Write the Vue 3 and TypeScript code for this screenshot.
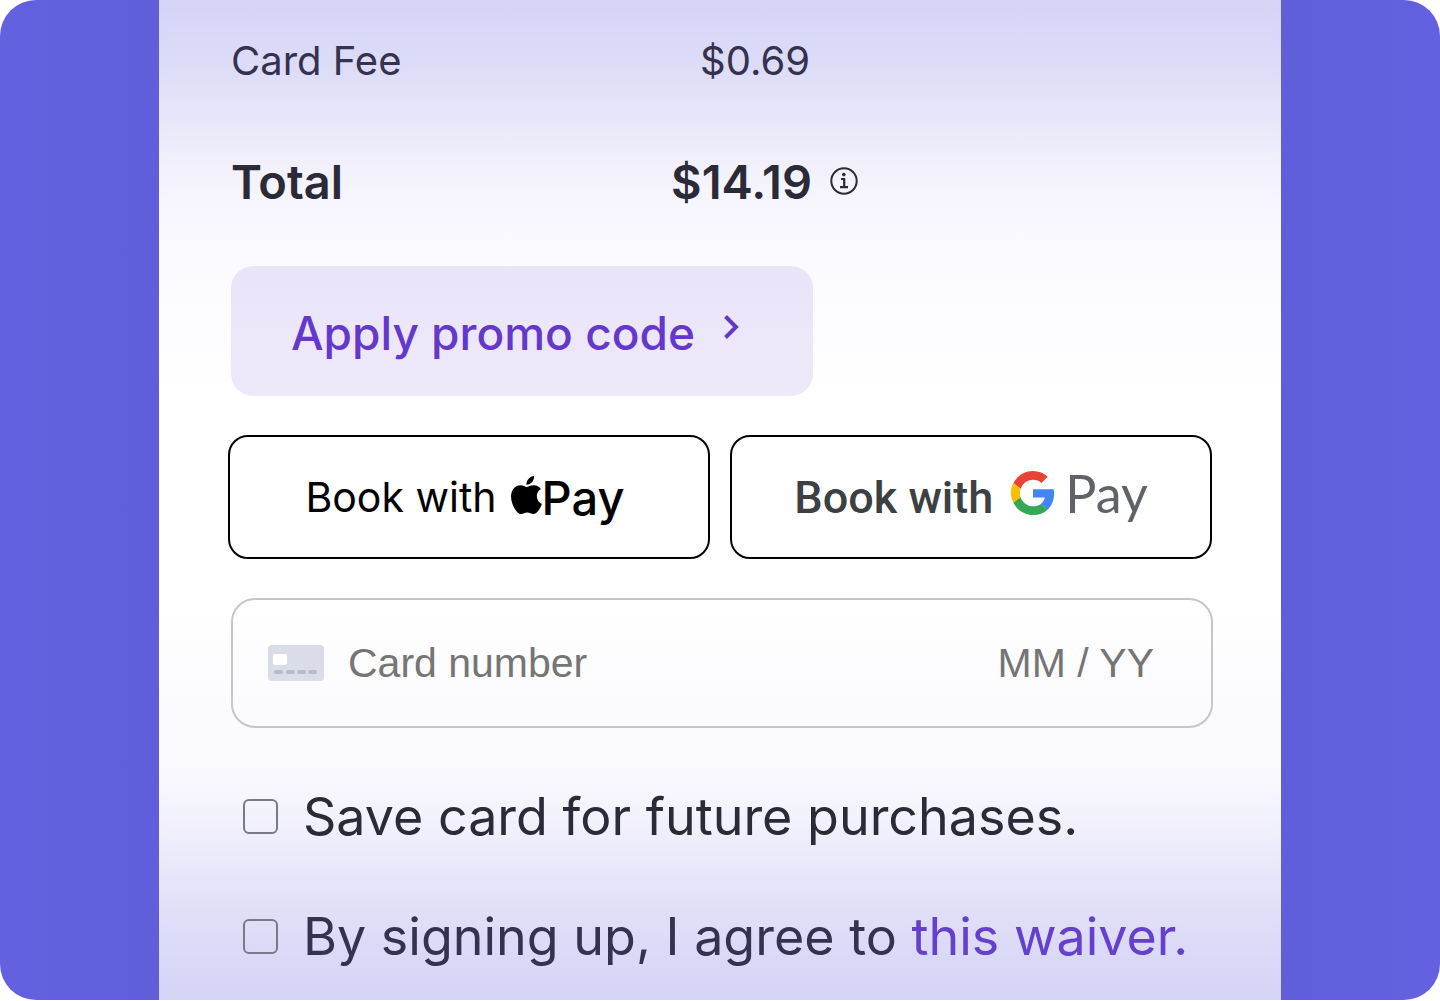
<script setup lang="ts">
import { ref } from 'vue'

interface PriceLine {
  label: string
  amount: string
  total: boolean
}

const lines: PriceLine[] = [
  { label: 'Card Fee', amount: '$0.69', total: false },
  { label: 'Total', amount: '$14.19', total: true },
]

const cardNumber = ref('')
const expiry = ref('')
const saveCard = ref(false)
const agree = ref(false)
</script>

<template>
  <div class="frame">
    <main class="panel">
      <dl class="prices">
        <div v-for="line in lines" :key="line.label" class="price" :class="{ total: line.total }">
          <dt>{{ line.label }}</dt>
          <dd>{{ line.amount }}</dd>
          <svg v-if="line.total" class="info" viewBox="0 0 28 28" role="img" aria-label="Details">
            <circle cx="14" cy="14" r="12.7" fill="none" stroke="currentColor" stroke-width="2" />
            <circle cx="13.8" cy="7.6" r="1.8" fill="currentColor" />
            <path d="M11 12h3.2v8M10 20.2h8" fill="none" stroke="currentColor" stroke-width="2.2" />
          </svg>
        </div>
      </dl>

      <button type="button" class="promo">
        <span>Apply promo code</span>
        <svg class="chevron" viewBox="0 0 16 26" aria-hidden="true">
          <path d="M2.5 2.5 13 13 2.5 23.5" fill="none" stroke="currentColor" stroke-width="4" />
        </svg>
      </button>

      <div class="wallets">
        <button type="button" class="wallet apple">
          <span class="book">Book with</span>
          <span class="brand">
            <svg class="apple-mark" viewBox="2.2 0 19.6 24" aria-hidden="true">
              <path d="M12.152 6.896c-.948 0-2.415-1.078-3.96-1.04-2.04.027-3.91 1.183-4.961 3.014-2.117 3.675-.546 9.103 1.519 12.09 1.013 1.454 2.208 3.09 3.792 3.039 1.52-.065 2.09-.987 3.935-.987 1.831 0 2.35.987 3.96.948 1.637-.026 2.676-1.48 3.676-2.948 1.156-1.688 1.636-3.325 1.662-3.415-.039-.013-3.182-1.221-3.22-4.857-.026-3.04 2.48-4.494 2.597-4.559-1.429-2.09-3.623-2.324-4.39-2.376-2-.156-3.675 1.09-4.61 1.09zM15.53 3.83c.843-1.012 1.4-2.427 1.245-3.83-1.207.052-2.662.805-3.532 1.818-.78.896-1.454 2.338-1.273 3.714 1.338.104 2.715-.688 3.559-1.701" />
            </svg>
            <span class="pay">Pay</span>
          </span>
        </button>
        <button type="button" class="wallet google">
          <span class="book">Book with</span>
          <span class="brand">
            <svg class="google-mark" viewBox="0 0 48 48" aria-hidden="true">
              <path fill="#ea4335" d="M24 9.5c3.54 0 6.71 1.22 9.21 3.6l6.85-6.85C35.9 2.38 30.47 0 24 0 14.62 0 6.51 5.38 2.56 13.22l7.98 6.19C12.43 13.72 17.74 9.5 24 9.5z" />
              <path fill="#4285f4" d="M46.98 24.55c0-1.57-.15-3.09-.38-4.55H24v9.02h12.94c-.58 2.96-2.26 5.48-4.78 7.18l7.73 6c4.51-4.18 7.09-10.36 7.09-17.65z" />
              <path fill="#fbbc05" d="M10.53 28.59c-.48-1.45-.76-2.99-.76-4.59s.27-3.14.76-4.59l-7.98-6.19C.92 16.46 0 20.12 0 24c0 3.88.92 7.54 2.56 10.78l7.97-6.19z" />
              <path fill="#34a853" d="M24 48c6.48 0 11.93-2.13 15.89-5.81l-7.73-6c-2.15 1.45-4.92 2.3-8.16 2.3-6.26 0-11.57-4.22-13.47-9.91l-7.98 6.19C6.51 42.62 14.62 48 24 48z" />
            </svg>
            <span class="pay">Pay</span>
          </span>
        </button>
      </div>

      <div class="card">
        <svg class="card-icon" viewBox="0 0 56 36" aria-hidden="true">
          <rect width="56" height="36" rx="4" fill="#dadce7" />
          <rect x="5" y="9" width="14" height="11" rx="2" fill="#fff" />
          <path d="M8 27h5M20 27h5M31 27h5M42 27h5" stroke="#b7b9cf" stroke-width="4" stroke-linecap="round" />
        </svg>
        <input v-model="cardNumber" class="number" type="text" inputmode="numeric" placeholder="Card number" aria-label="Card number" />
        <input v-model="expiry" class="expiry" type="text" inputmode="numeric" placeholder="MM / YY" aria-label="Expiry date" />
      </div>

      <div class="checks">
        <div class="check">
          <input id="save-card" v-model="saveCard" type="checkbox" />
          <label for="save-card">Save card for future purchases.</label>
        </div>
        <div class="check agree">
          <input id="agree" v-model="agree" type="checkbox" />
          <label for="agree">By signing up, I agree to <a href="#waiver">this waiver.</a></label>
        </div>
      </div>
    </main>
  </div>
</template>

<style>
body {
  background: #fff;
}
</style>

<style scoped>
.frame {
  box-sizing: border-box;
  padding: 0 159px;
  border-radius: 36px;
  background: linear-gradient(90deg, #6361df 0%, #615edb 11%, #615edb 89%, #6361df 100%);
  font-family: Inter, "Noto Sans", sans-serif;
}

.panel {
  box-sizing: border-box;
  padding: 0 69px 4px;
  background: linear-gradient(
    180deg,
    #d5d4f6 0%,
    #dcdbf8 6%,
    #e6e5f9 11%,
    #f0effb 16%,
    #f7f6fe 20%,
    #fbfaff 27%,
    #ffffff 40%,
    #ffffff 60%,
    #fafafe 73%,
    #f7f7fd 79%,
    #eeedfb 84%,
    #e3e1f8 90%,
    #d9d8f6 96%,
    #d5d4f5 100%
  );
}

.prices {
  max-width: 627px;
  margin: 0 0 24px 3px;
}

.price {
  display: grid;
  grid-template-columns: 1fr auto 28px;
  column-gap: 18px;
  align-items: center;
  height: 120px;
  font-size: 40px;
  color: #34324f;
}

.price dd {
  margin: 0;
  padding-right: 2px;
}

.price.total {
  height: 122px;
  font-size: 47px;
  font-weight: 600;
  color: #2b2a38;
}

.price.total dd {
  padding: 0;
}

.info {
  width: 28px;
  height: 28px;
}

.promo {
  display: flex;
  align-items: center;
  gap: 28px;
  box-sizing: border-box;
  width: 100%;
  max-width: 582px;
  height: 130px;
  margin: 0 0 39px 3px;
  padding: 4px 60px 0;
  border: 0;
  border-radius: 22px;
  background: rgba(101, 56, 204, 0.11);
  color: #6538cc;
  font: 500 46px Inter, "Noto Sans", sans-serif;
}

.chevron {
  width: 16px;
  height: 26px;
  margin-bottom: 12px;
}

.wallets {
  display: grid;
  grid-template-columns: 1fr 1fr;
  gap: 20px;
  margin-bottom: 39px;
}

.wallet {
  display: flex;
  align-items: center;
  justify-content: center;
  height: 124px;
  padding: 0;
  border: 2px solid #000;
  border-radius: 20px;
  background: #fff;
  white-space: nowrap;
}

.brand {
  display: flex;
  align-items: center;
}

.apple {
  gap: 14px;
  padding-right: 8px;
  color: #000;
  font: 400 41px Inter, "Noto Sans", sans-serif;
}

.apple .pay {
  font-size: 47px;
  font-weight: 500;
}

.apple-mark {
  width: 31px;
  height: 38px;
  margin-bottom: 4px;
}

.google {
  gap: 18px;
  color: #3c4043;
  font: 500 45px Roboto, sans-serif;
}

.google .brand {
  gap: 10px;
  margin-bottom: 8px;
}

.google .pay {
  color: #5f6368;
  font: 400 52px Lato, sans-serif;
}

.google-mark {
  width: 44px;
  height: 44px;
}

.card {
  display: flex;
  align-items: center;
  box-sizing: border-box;
  height: 130px;
  margin: 0 -1px 28px 3px;
  padding: 0 57px 0 35px;
  border: 2px solid #c6c6c8;
  border-radius: 24px;
}

.card-icon {
  flex: none;
  width: 56px;
  height: 36px;
  margin-right: 24px;
}

.card input {
  min-width: 0;
  padding: 0;
  border: 0;
  outline: 0;
  background: transparent;
  color: #2b2a38;
  font: 400 41px "Liberation Sans", Arial, sans-serif;
}

.card input::placeholder {
  color: #757575;
  opacity: 1;
}

.number {
  flex: 1;
}

.expiry {
  width: 180px;
  text-align: right;
}

.check {
  display: flex;
  align-items: center;
  gap: 25px;
  height: 120px;
  margin-left: 15px;
  font-size: 52px;
  color: #2b2a38;
  white-space: nowrap;
}

.check input {
  appearance: none;
  flex: none;
  box-sizing: border-box;
  width: 35px;
  height: 35px;
  margin: 0;
  border: 2px solid #7a798a;
  border-radius: 6px;
}

.check input:checked {
  background: #6538cc;
}

.agree {
  color: #34324f;
}

.agree a {
  color: #6540cc;
  text-decoration: none;
}
</style>
